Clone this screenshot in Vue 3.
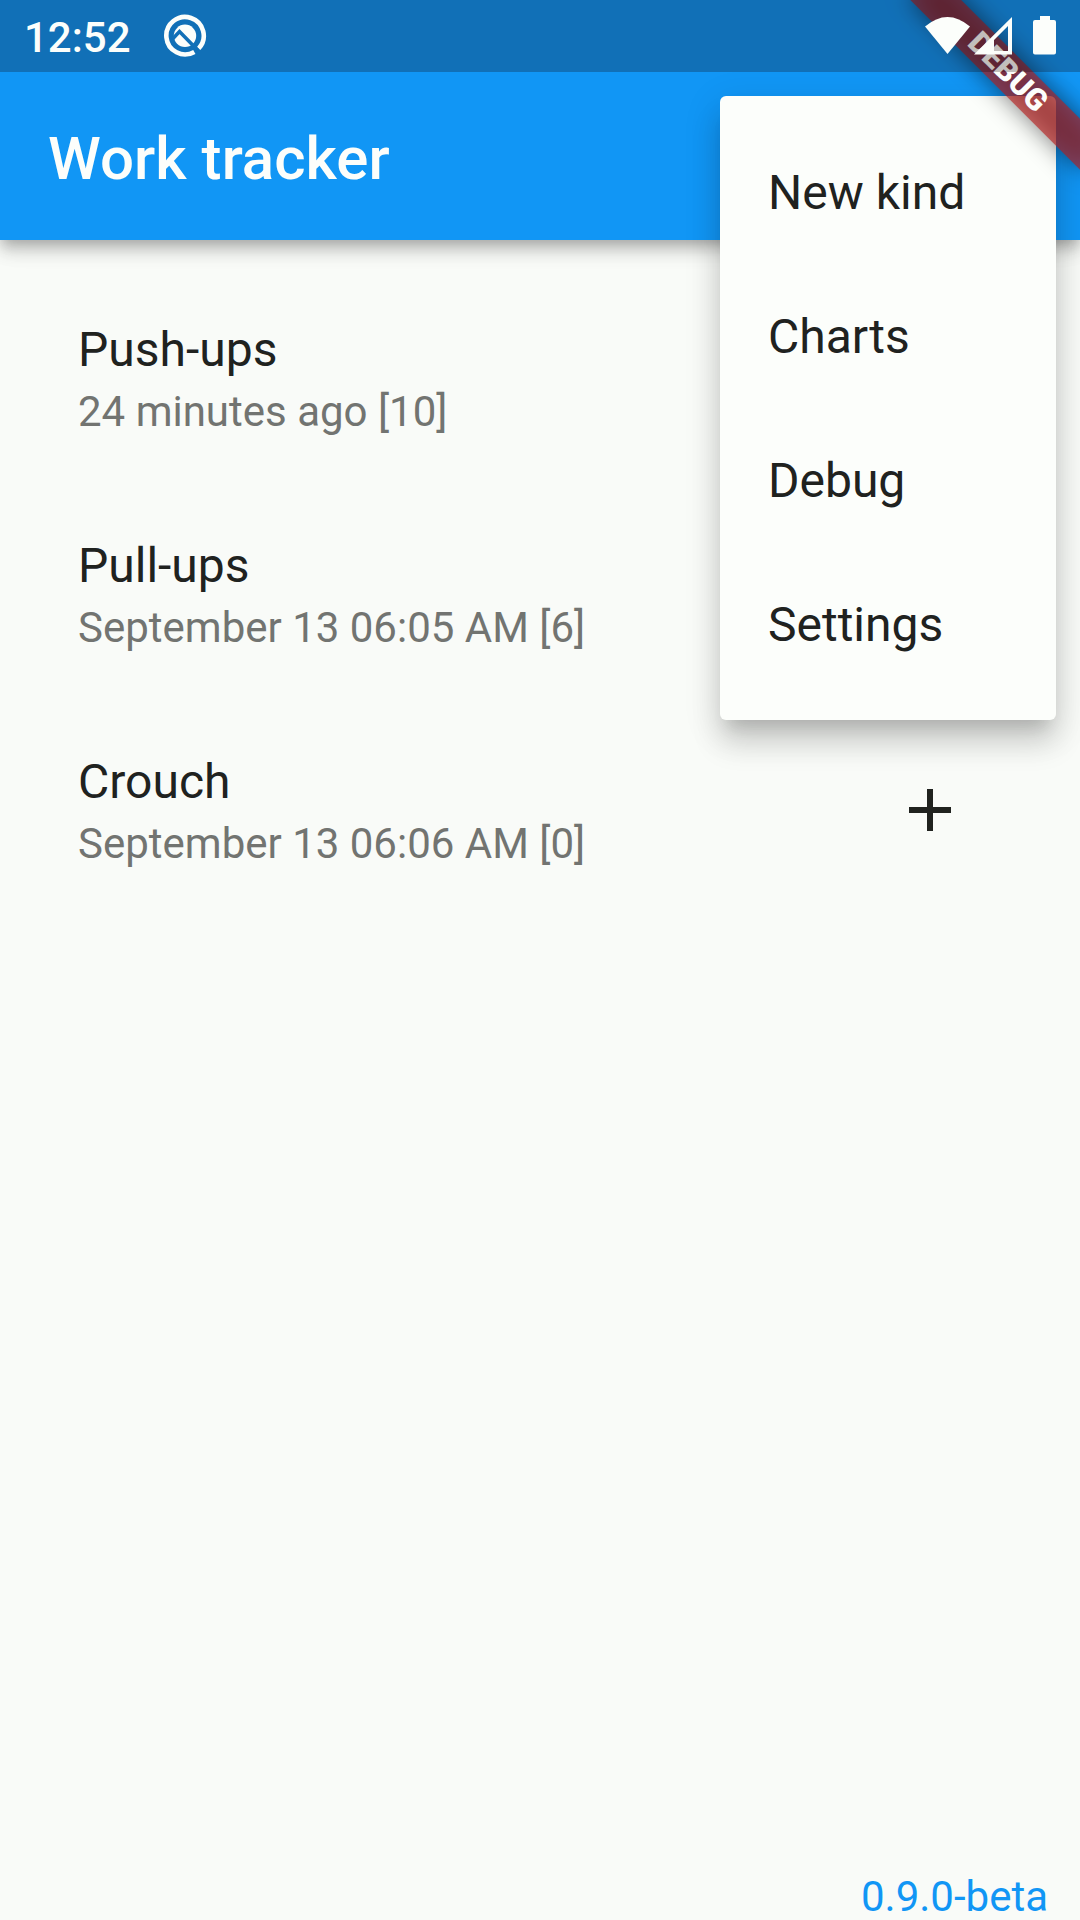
<script setup>
const kinds = [
  { name: 'Push-ups', last: '24 minutes ago [10]' },
  { name: 'Pull-ups', last: 'September 13 06:05 AM [6]' },
  { name: 'Crouch', last: 'September 13 06:06 AM [0]' },
]
const menu = ['New kind', 'Charts', 'Debug', 'Settings']
</script>

<template>
  <div class="screen">
    <header class="app-bar">
      <h1 class="title">Work tracker</h1>
    </header>

    <main class="list">
      <div v-for="kind in kinds" :key="kind.name" class="row">
        <div class="texts">
          <div class="name">{{ kind.name }}</div>
          <div class="last">{{ kind.last }}</div>
        </div>
        <svg class="plus" viewBox="0 0 24 24"><path d="M19 13h-6v6h-2v-6H5v-2h6V5h2v6h6v2z" /></svg>
      </div>
    </main>

    <footer class="version">0.9.0-beta</footer>

    <nav class="menu">
      <div v-for="item in menu" :key="item" class="item">{{ item }}</div>
    </nav>

    <div class="banner">DEBUG</div>

    <div class="status">
      <span class="clock">12:52</span>
      <svg class="q" viewBox="0 0 44 44">
        <path d="M31.35 37.9A18.7 18.7 0 1 1 35.7 34.45" fill="none" stroke="#fcfefb" stroke-width="4.6" />
        <circle cx="22" cy="21.800" r="11.2" fill="#fcfefb" />
        <path d="M9.500 25L16.500 17.500L34.500 36" fill="none" stroke="#1270b8" stroke-width="3.6" />
      </svg>
      <svg class="signals" viewBox="0 0 150 56">
        <path d="M10 18.5Q32.5-.5 55 18.5L32.5 46Z" />
        <path fill-rule="evenodd" d="M59 46.5L97 9V46.5ZM79 43H93V18L79 32Z" />
        <path d="M125 8h10v4h4q2 0 2 2v30.500q0 2-2 2h-19q-2 0-2-2V14q0-2 2-2h5z" />
      </svg>
    </div>
  </div>
</template>

<style>
body {
  margin: 0;
}
</style>

<style scoped>
.screen {
  position: relative;
  display: flex;
  flex-direction: column;
  width: 1080px;
  height: 1920px;
  overflow: hidden;
  background: #f9fbf8;
  font-family: Roboto, sans-serif;
  color: #20221f;
}
.app-bar {
  flex: none;
  box-sizing: border-box;
  height: 240px;
  padding: 78px 48px 0;
  display: flex;
  align-items: center;
  background: #1196f5;
  box-shadow: 0 6px 12px -3px rgba(0, 0, 0, 0.2), 0 12px 15px rgba(0, 0, 0, 0.14), 0 3px 30px rgba(0, 0, 0, 0.08);
}
.title {
  margin: 0;
  font-size: 60px;
  line-height: 70px;
  font-weight: 500;
  letter-spacing: 0.05px;
  color: #fcfefb;
}
.list {
  flex: 1;
  padding: 30px;
}
.row {
  display: flex;
  justify-content: space-between;
  height: 216px;
  padding: 0 84px 0 48px;
}
.texts {
  padding-top: 52px;
}
.name {
  font-size: 48px;
  line-height: 56px;
}
.last {
  margin-top: 9px;
  font-size: 42px;
  line-height: 50px;
  color: #727471;
}
.plus {
  align-self: center;
  width: 72px;
  height: 72px;
  fill: #20221f;
}
.version {
  flex: none;
  height: 48px;
  padding-right: 32px;
  text-align: right;
  font-size: 42px;
  line-height: 49px;
  color: #1196f5;
}
.menu {
  position: absolute;
  left: 720px;
  top: 96px;
  box-sizing: border-box;
  width: 336px;
  height: 624px;
  padding: 24px 0;
  border-radius: 6px;
  background: #fcfefb;
  box-shadow: 0 15px 15px -9px rgba(0, 0, 0, 0.12), 0 24px 30px 0 rgba(0, 0, 0, 0.14), 0 9px 36px 3px rgba(0, 0, 0, 0.1);
}
.item {
  height: 144px;
  padding: 0 48px;
  font-size: 48px;
  line-height: 146px;
}
.banner {
  position: absolute;
  left: 960px;
  top: 84px;
  width: 240px;
  height: 36px;
  transform-origin: 120px -84px;
  transform: rotate(45deg);
  color: #fcfefb;
  font-size: 30.6px;
  font-weight: 900;
  line-height: 36px;
  text-align: center;
}
/* The shadow lies under the translucent ribbon and darkens it. */
.banner::before,
.banner::after {
  content: '';
  position: absolute;
  inset: 0;
  z-index: -1;
}
.banner::before {
  background: rgba(0, 0, 0, 0.5);
  filter: blur(12px);
}
.banner::after {
  background: rgba(183, 28, 28, 0.63);
}
.status {
  position: absolute;
  left: 0;
  top: 0;
  box-sizing: border-box;
  width: 1080px;
  height: 72px;
  padding: 0 15px 0 24px;
  display: flex;
  align-items: center;
  background: rgba(20, 0, 0, 0.25);
  color: #fcfefb;
}
.clock {
  width: 139px;
  padding-top: 3px;
  font-size: 42px;
  font-weight: 500;
  line-height: 72px;
}
.q {
  width: 44px;
  height: 44px;
}
.signals {
  width: 150px;
  height: 56px;
  margin-left: auto;
  fill: #fcfefb;
}
</style>
